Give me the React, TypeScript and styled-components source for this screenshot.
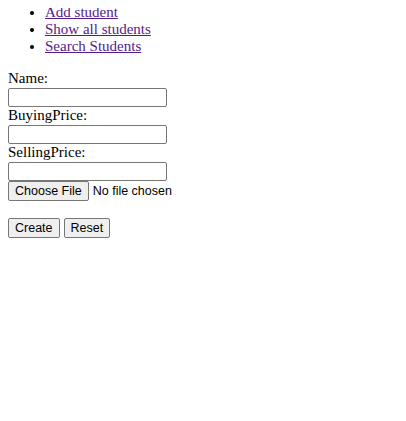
import React from "react";
import styled, { createGlobalStyle } from "styled-components";

const Global = createGlobalStyle`
  body {
    margin: 8px;
    font-family: "Liberation Serif", "Times New Roman", serif;
    font-size: 15px;
    line-height: 17px;
    color: #000;
    background: #fff;
  }
`;

const NavList = styled.ul`
  margin: -4px 0 15px;
  padding-left: 37px;
  list-style: disc;
`;

const NavItem = styled.li`
  line-height: 17px;
`;

const NavLink = styled.a`
  color: #551a8b;
  text-decoration: underline;
  cursor: pointer;
`;

const Form = styled.form`
  margin: 0;
  display: flex;
  flex-direction: column;
  align-items: flex-start;
`;

const Label = styled.label`
  display: block;
  height: 17px;
  line-height: 17px;
`;

const TextInput = styled.input`
  display: block;
  box-sizing: border-box;
  font-family: "Liberation Sans", Arial, sans-serif;
  font-size: 12.5px;
  width: 159px;
  height: 19px;
  padding: 1px 2px;
  margin: 1px 0 0;
  border: 1px solid #767676;
  border-radius: 2px;
  background: #fff;
`;

const Button = styled.button`
  box-sizing: border-box;
  height: 20px;
  font-family: "Liberation Sans", Arial, sans-serif;
  font-size: 12.5px;
  line-height: 14px;
  padding: 1px 6px;
  border: 1px solid #767676;
  border-radius: 2px;
  background: #efefef;
  color: #000;
  margin: 0;
`;

const FileRow = styled.div`
  display: flex;
  align-items: center;
  gap: 4px;
  font-family: "Liberation Sans", Arial, sans-serif;
  font-size: 12.5px;
`;

const Actions = styled.div`
  display: flex;
  gap: 4px;
  margin-top: 17px;
`;

export default function App() {
  return (
    <>
      <Global />
      <NavList>
        <NavItem><NavLink href="#">Add student</NavLink></NavItem>
        <NavItem><NavLink href="#">Show all students</NavLink></NavItem>
        <NavItem><NavLink href="#">Search Students</NavLink></NavItem>
      </NavList>
      <Form onSubmit={(e) => e.preventDefault()}>
        <Label>Name:</Label>
        <TextInput type="text" />
        <Label>BuyingPrice:</Label>
        <TextInput type="text" />
        <Label>SellingPrice:</Label>
        <TextInput type="text" />
        <FileRow>
          <Button type="button">Choose File</Button>
          <span>No file chosen</span>
        </FileRow>
        <Actions>
          <Button type="submit">Create</Button>
          <Button type="reset">Reset</Button>
        </Actions>
      </Form>
    </>
  );
}
